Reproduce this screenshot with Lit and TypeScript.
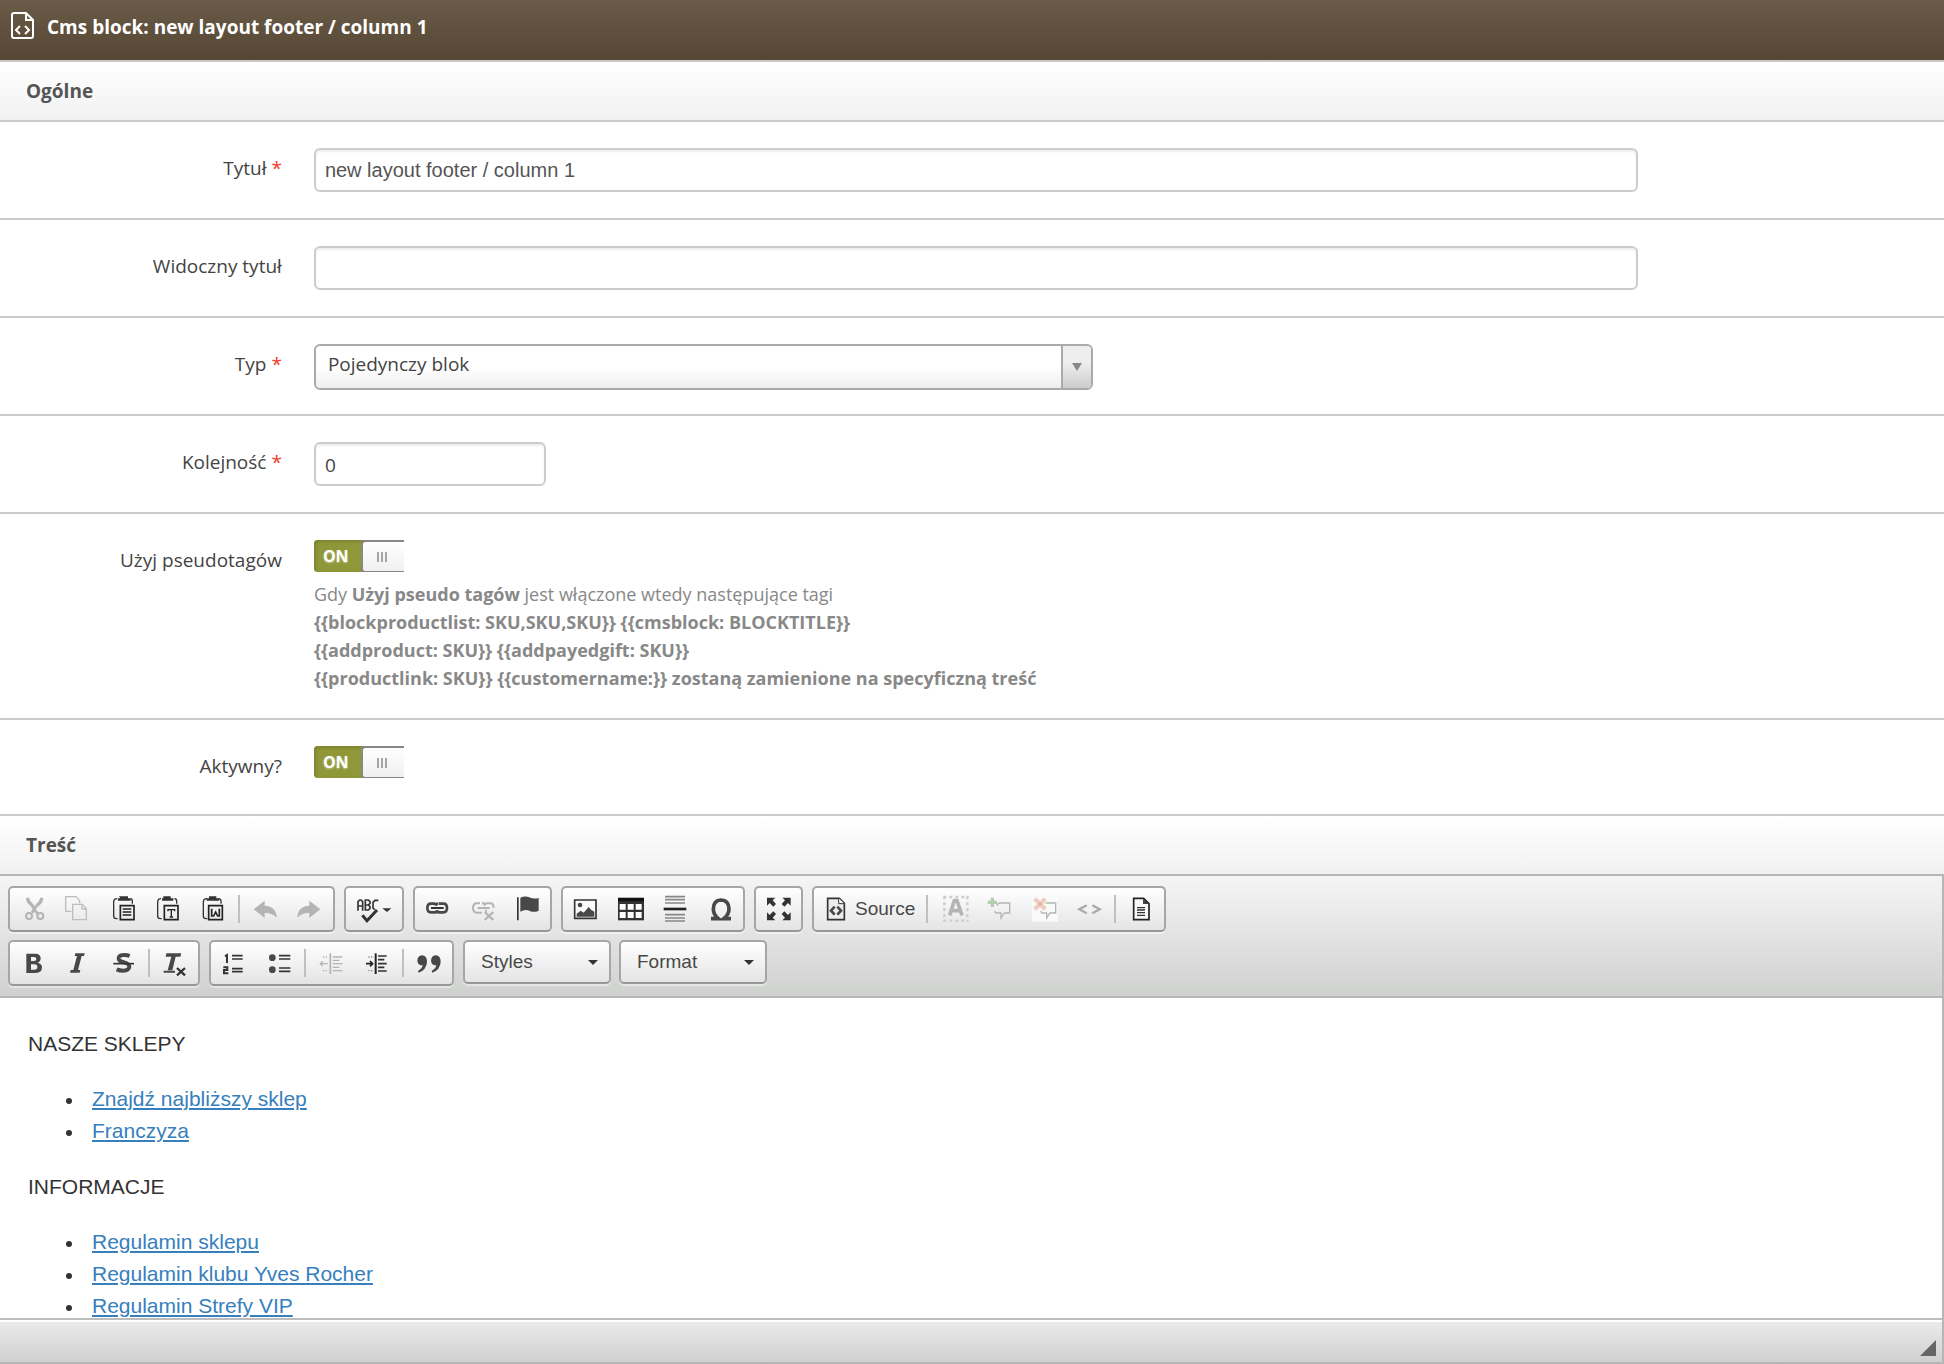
import { LitElement, html, css, svg, nothing, TemplateResult, SVGTemplateResult } from "lit";
import { customElement, property } from "lit/decorators.js";

const DARK = "#333";
const MID = "#484848";
const OFF = "#b4b4b4";

interface Glyph {
  box: string;
  art: SVGTemplateResult;
}

/* Toolbar glyphs, drawn on a grid of three units to the pixel. */
const GLYPHS: Record<string, Glyph> = {
  cut: {
    box: "30 39 135 126",
    art: svg`<g fill=${OFF}><path d="M78 68h9q2 9 10 17l9 11-6 9-10-14Q78 84 78 68Z"/><path d="M130 68h-9q-2 9-10 17l-9 10-9 15 6 6 14-21q17-11 17-27Z"/><path d="m103 98 14 17-5 5-13-15Z"/></g>
      <g fill="none" stroke=${OFF} stroke-width="6"><circle cx="87" cy="123" r="9"/><circle cx="121" cy="123" r="9"/></g>`,
  },
  copy: {
    box: "165 39 135 126",
    art: svg`<g fill="none" stroke="#bdbdbd" stroke-width="4"><path d="M214 109h-17V65h31l11 12v8"/><path d="M218 88h29l12 13v33h-41Z"/><path d="M246 88v14h13"/></g>`,
  },
  paste: {
    box: "300 39 135 126",
    art: svg`<path d="M357 64h27v6h8v7h-38v-7h7Z" fill=${DARK}/><path d="M352 71q-11 0-11 10v42q0 8 8 8h4M391 71q6 0 6 8v7" fill="none" stroke=${DARK} stroke-width="4"/>
      <path d="M361 92h41v42h-41Z" fill="none" stroke="#222" stroke-width="5"/><path d="M368 102h26M368 111h26M368 120h26" stroke="#222" stroke-width="5"/>`,
  },
  pasteText: {
    box: "435 39 135 126",
    art: svg`<path d="M490 64h22v6h8v7h-34v-7h4Z" fill=${DARK}/><path d="M483 71q-10 0-10 10v42q0 8 8 8h4M523 71q7 0 7 8v7" fill="none" stroke=${DARK} stroke-width="4"/>
      <path d="M493 92h41v42h-41Z" fill="none" stroke="#222" stroke-width="5"/><path d="M502 104h24M514 104v22M504 104v5M524 104v5M509 126h10" fill="none" stroke="#222" stroke-width="4"/>`,
  },
  pasteWord: {
    box: "570 39 135 126",
    art: svg`<path d="M627 64h22v6h8v7h-37v-7h7Z" fill=${DARK}/><path d="M621 71q-11 0-11 10v42q0 8 8 8h4M655 71q8 0 8 8v7" fill="none" stroke=${DARK} stroke-width="4"/>
      <path d="M626 92h41v42h-41Z" fill="none" stroke="#222" stroke-width="5"/><path d="M635 101v22h6l6-12 6 12h5v-22" fill="none" stroke="#222" stroke-width="5"/>`,
  },
  undo: {
    box: "729 39 135 126",
    art: svg`<path d="m761 103 33-26v15q35 2 36 36-13-15-36-14v15Z" fill=${OFF}/>`,
  },
  redo: {
    box: "864 39 135 126",
    art: svg`<path d="m961 103-33-26v15q-35 2-36 36 13-15 36-14v15Z" fill=${OFF}/>`,
  },
  spell: {
    box: "1038 39 168 126",
    art: svg`<g fill="none" stroke=${DARK} stroke-width="5"><path d="M1074 107V80l5-5h4l5 5v27M1074 93h14M1096 75v30h9l5-5v-5l-5-5h-9h9l5-5v-5l-5-5ZM1135 76h-10l-6 6v17l5 5"/></g>
      <path d="m1087 121 14 16 30-32" fill="none" stroke=${DARK} stroke-width="9"/><path d="M1147 100h27l-13 11Z" fill=${DARK}/>`,
  },
  link: {
    box: "45 39 135 126",
    art: svg`<g fill="none" stroke=${MID} stroke-width="8"><path d="M106 86H93q-11 0-11 13t11 13h12q8 0 10-6M117 86h13q11 0 11 13t-11 13h-12q-8 0-10-6M106 92q2-6 9-6"/></g><path d="M93 99h38" stroke=${DARK} stroke-width="6"/>`,
  },
  unlink: {
    box: "180 39 135 126",
    art: svg`<g fill="none" stroke=${OFF} stroke-width="6"><path d="M240 85h-9q-12 0-12 14t12 14h15M252 92q3-7 10-7h8q11 0 11 13M233 99h36M246 85h8M258 104v6"/><path d="m254 111 26 24m0-24-26 24" stroke-width="7"/></g>`,
  },
  anchor: {
    box: "315 39 135 126",
    art: svg`<path d="M351 67h5v69h-5Z" fill=${DARK}/><path d="M361 68q14-7 27-1 13 6 28 2v38q-15 7-28 0-13-5-27 3Z" fill=${MID}/>`,
  },
  image: {
    box: "489 39 135 126",
    art: svg`<path d="M524 75h64v55h-64Z" fill="#fafafa" stroke=${DARK} stroke-width="5"/><circle cx="540" cy="90" r="7" fill=${MID}/><path d="M530 125v-9l12-9 9 6 15-17 8 9 9 5v15Z" fill=${MID}/>`,
  },
  table: {
    box: "624 39 135 126",
    art: svg`<path d="M654 68h78v68h-78Z" fill=${DARK}/><path d="M654 74h78" stroke="#111" stroke-width="10"/><g fill="#fff"><path d="M659 87h18v17h-18ZM683 87h18v17h-18ZM707 87h18v17h-18ZM659 111h18v18h-18ZM683 111h18v18h-18ZM707 111h18v18h-18Z"/></g>`,
  },
  rule: {
    box: "759 39 135 126",
    art: svg`<path d="M791 102h68" stroke="#222" stroke-width="8"/><path d="M795 65h60M795 74h60M795 84h60M795 119h60M795 129h60M795 138h60" stroke="#888" stroke-width="5"/>`,
  },
  omega: {
    box: "894 39 135 126",
    art: svg`<path d="M933 131h22q-15-12-15-29 0-26 23-27 24 1 24 27 0 17-16 29h22" fill="none" stroke=${MID} stroke-width="11"/>`,
  },
  maximize: {
    box: "1068 39 135 126",
    art: svg`<g fill=${DARK}><path d="M1101 68h25l-8 8 10 11-8 8-11-11-8 8ZM1172 68h-25l8 8-10 11 8 8 11-11 8 8ZM1101 136h25l-8-8 10-11-8-8-11 11-8-8ZM1172 136h-25l8-8-10-11 8-8 11 11 8-8Z"/></g>`,
  },
  source: {
    box: "129 39 84 126",
    art: svg`<path d="M143 70h35l15 15v49h-50Z" fill="#ececec" stroke=${DARK} stroke-width="5"/><path d="M176 70v16h17" fill="#fff" stroke=${DARK} stroke-width="3"/><path d="m164 95-11 12 11 12M172 95l11 12-11 12" fill="none" stroke=${MID} stroke-width="8"/>`,
  },
  selectAll: {
    box: "453 39 135 126",
    art: svg`<path d="M490 66h76M490 137h76M493 64v76M562 64v76" stroke="#cdcdcd" stroke-width="7" stroke-dasharray="9 9" fill="none"/><path d="m509 121 14-44h8l15 44M514 107h28" fill="none" stroke=${OFF} stroke-width="11"/>`,
  },
  commentAdd: {
    box: "588 39 135 126",
    art: svg`<path d="M651 92q2-8 10-8h28v30h-16l-10 15v-15h-13q-5 0-5-6" fill="none" stroke=${OFF} stroke-width="4"/><path d="M637 68v28M623 82h28" stroke="#b3cfae" stroke-width="10"/>`,
  },
  commentRemove: {
    box: "723 39 135 126",
    art: svg`<path d="M756 64h78v76h-78Z" fill="#fafafa"/><path d="M797 84h30v30h-17l-10 15v-15h-12q-5 0-5-6" fill="none" stroke=${OFF} stroke-width="4"/><path d="m764 71 32 32m0-32-32 32" stroke="#efccc2" stroke-width="13"/><path d="M776 83h8v8h-8Z" fill="#dfa99d"/>`,
  },
  code: {
    box: "858 39 135 126",
    art: svg`<path d="m920 91-22 12 22 12M937 91l22 12-22 12" fill="none" stroke="#aaa" stroke-width="7"/>`,
  },
  template: {
    box: "1017 39 135 126",
    art: svg`<path d="M1061 70h30l16 16v48h-46Z" fill="#fafafa" stroke="#222" stroke-width="5"/><path d="M1089 70v17h18" fill="#444"/><path d="M1071 98h24M1071 105h24M1071 113h24M1071 121h24" stroke="#333" stroke-width="4"/>`,
  },
  bold: {
    box: "30 201 135 126",
    art: svg`<path d="M79 236h27q16 0 16 14 0 10-9 13 13 3 13 14 0 17-19 17H79Zm14 10v12h9q7 0 7-6t-7-6Zm0 22v16h10q9 0 9-8t-9-8Z" fill=${MID} fill-rule="evenodd"/>`,
  },
  italic: {
    box: "165 201 135 126",
    art: svg`<path d="M226 235h28l-2 8h-7l-11 42h7l-2 8h-29l2-8h8l11-42h-7Z" fill=${MID}/>`,
  },
  strike: {
    box: "300 201 135 126",
    art: svg`<path d="M389 243q-10-4-19-3-15 1-14 11 1 8 16 11 16 4 16 13-1 12-18 12-11 0-20-4" fill="none" stroke=${MID} stroke-width="12"/><path d="M340 266h62" stroke=${DARK} stroke-width="5"/>`,
  },
  clear: {
    box: "459 201 135 126",
    art: svg`<path d="M499 235h45l-3 10h-14l-10 41h-14l11-41h-17ZM491 287h34v6h-34Z" fill=${MID}/><path d="m531 279 24 22m0-22-24 22" stroke=${DARK} stroke-width="7"/>`,
  },
  numbered: {
    box: "633 201 135 126",
    art: svg`<path d="M675 244l6-4v24M670 277h12v8h-10v10h13" fill="none" stroke=${DARK} stroke-width="6"/><path d="M696 242h32M696 252h32M696 281h32M696 290h32" stroke=${DARK} stroke-width="5"/>`,
  },
  bulleted: {
    box: "768 201 135 126",
    art: svg`<g fill=${MID}><circle cx="817" cy="248" r="10"/><circle cx="817" cy="284" r="10"/></g><path d="M837 242h34M837 252h34M837 279h34M837 289h34" stroke=${DARK} stroke-width="5"/>`,
  },
  outdent: {
    box: "927 201 135 126",
    art: svg`<path d="M991 235v62" stroke=${OFF} stroke-width="5"/><path d="M998 246h29M998 256h20M998 266h29M998 277h20M998 287h29" stroke=${OFF} stroke-width="4"/><path d="M969 246h16M969 287h16" stroke=${OFF} stroke-width="4" stroke-dasharray="4 4"/><path d="M962 266h21m-15-7-7 7 7 7" fill="none" stroke=${OFF} stroke-width="4"/>`,
  },
  indent: {
    box: "1062 201 135 126",
    art: svg`<path d="M1127 235v62" stroke="#222" stroke-width="6"/><path d="M1134 243h26M1134 254h19M1134 266h26M1134 277h19M1134 288h26" stroke="#333" stroke-width="5"/><path d="M1105 246h16M1105 287h16" stroke="#888" stroke-width="4" stroke-dasharray="4 4"/><path d="M1098 266h20m-8-8 8 8-8 8" fill="none" stroke="#222" stroke-width="5"/>`,
  },
  quote: {
    box: "21 201 135 126",
    art: svg`<g fill=${MID}><path d="M66 241q15 1 15 19-1 24-25 33l-2-5q13-8 14-17-15 0-16-14 1-15 14-16Z"/><path d="M107 241q15 1 15 19-1 24-25 33l-2-5q13-8 14-17-15 0-16-14 1-15 14-16Z"/></g>`,
  },
};

type Tool = { glyph: string; label: string; off?: boolean; text?: string } | "|";

const t = (glyph: string, label: string, off = false, text = ""): Tool => ({ glyph, label, off, text });

const ROW_ONE: Tool[][] = [
  [
    t("cut", "Cut", true),
    t("copy", "Copy", true),
    t("paste", "Paste"),
    t("pasteText", "Paste as plain text"),
    t("pasteWord", "Paste from Word"),
    "|",
    t("undo", "Undo", true),
    t("redo", "Redo", true),
  ],
  [t("spell", "Spell Check As You Type")],
  [t("link", "Link"), t("unlink", "Unlink", true), t("anchor", "Anchor")],
  [t("image", "Image"), t("table", "Table"), t("rule", "Insert Horizontal Line"), t("omega", "Insert Special Character")],
  [t("maximize", "Maximize")],
  [
    t("source", "Source", false, "Source"),
    "|",
    t("selectAll", "Auto format", true),
    t("commentAdd", "Comment selection", true),
    t("commentRemove", "Uncomment selection", true),
    t("code", "Tag completion", true),
    "|",
    t("template", "Templates"),
  ],
];

const ROW_TWO: Tool[][] = [
  [t("bold", "Bold"), t("italic", "Italic"), t("strike", "Strikethrough"), "|", t("clear", "Remove Format")],
  [
    t("numbered", "Numbered list"),
    t("bulleted", "Bulleted list"),
    "|",
    t("outdent", "Decrease Indent", true),
    t("indent", "Increase Indent"),
    "|",
    t("quote", "Block Quote"),
  ],
];

@customElement("rich-editor")
export class RichEditor extends LitElement {
  static styles = css`
    :host {
      display: block;
      border: 2px solid #b6b6b6;
      border-left: 0;
      font-family: "Liberation Sans", Arial, sans-serif;
    }
    .toolbar {
      display: flex;
      flex-direction: column;
      gap: 8px;
      padding: 10px 8px;
      border-bottom: 2px solid #b6b6b6;
      background: linear-gradient(#f5f5f5, #cfd1cf);
    }
    .line {
      display: flex;
      flex-wrap: wrap;
      align-items: flex-start;
      gap: 9px;
    }
    .group,
    .combo {
      display: flex;
      align-items: center;
      box-sizing: border-box;
      border: 2px solid #a6a6a6;
      border-bottom-color: #979797;
      border-radius: 5px;
      background: linear-gradient(#fff, #e4e4e4);
      box-shadow: 0 2px 0 rgba(255, 255, 255, 0.4);
    }
    .tool {
      display: flex;
      align-items: center;
      height: 42px;
      padding: 0;
      border: 0;
      background: none;
      color: #484848;
      font: 19px "Liberation Sans", Arial, sans-serif;
    }
    .glyph {
      display: block;
      height: 42px;
    }
    .with-text {
      padding: 0 8px 0 9px;
      gap: 4px;
    }
    .rule {
      width: 2px;
      height: 28px;
      margin: 0 3px;
      background: #c0c0c0;
    }
    .combos {
      display: flex;
      gap: 8px;
    }
    .combo {
      height: 44px;
      display: grid;
      grid-template-columns: 144px;
      align-items: center;
    }
    .combo select {
      grid-area: 1 / 1;
      appearance: none;
      height: 40px;
      padding: 0 32px 2px 16px;
      border: 0;
      background: none;
      color: #484848;
      font: 19px "Liberation Sans", Arial, sans-serif;
    }
    .caret {
      grid-area: 1 / 1;
      justify-self: end;
      margin-right: 11px;
      pointer-events: none;
      border: 5px solid transparent;
      border-top-color: #333;
      border-bottom: 0;
    }
    .page {
      box-sizing: border-box;
      height: 320px;
      padding: 30px 28px 0;
      overflow: hidden;
      outline: 0;
      background: #fff;
      color: #333;
      font-size: 21px;
      line-height: 32px;
    }
    .page p {
      margin: 0 0 23px;
    }
    .page ul {
      margin: 0 0 24px;
      padding-left: 64px;
      list-style: none;
    }
    .page li::before {
      content: "";
      display: inline-block;
      width: 6px;
      height: 6px;
      margin: 0 20px 0 -26px;
      border-radius: 50%;
      background: #333;
      vertical-align: 2px;
    }
    .page a {
      color: #3680bd;
      text-decoration-thickness: 2px;
      text-underline-offset: 2px;
    }
    .status {
      display: flex;
      justify-content: flex-end;
      align-items: flex-end;
      box-sizing: border-box;
      height: 44px;
      padding: 0 6px 6px 0;
      border-top: 2px solid #bdbdbd;
      box-shadow: inset 0 2px 0 #fff;
      background: linear-gradient(#ebebeb, #cfd1cf);
    }
    .grip {
      width: 16px;
      height: 16px;
      background: #666;
      clip-path: polygon(100% 0, 100% 100%, 0 100%);
    }
  `;

  private tool(item: Tool): TemplateResult {
    if (item === "|") return html`<span class="rule"></span>`;
    const g = GLYPHS[item.glyph];
    return html`<button
      class="tool ${item.text ? "with-text" : ""}"
      type="button"
      title=${item.label}
      aria-label=${item.label}
      ?disabled=${item.off}
    >
      <svg class="glyph" viewBox=${g.box} width=${Number(g.box.split(" ")[2]) / 3} height="42" aria-hidden="true">${g.art}</svg>
      ${item.text ? html`<span>${item.text}</span>` : nothing}
    </button>`;
  }

  private combo(name: string): TemplateResult {
    return html`<span class="combo"
      ><select aria-label=${name}>
        <option>${name}</option></select
      ><span class="caret"></span
    ></span>`;
  }

  private groups(list: Tool[][]): TemplateResult[] {
    return list.map((g) => html`<div class="group">${g.map((i) => this.tool(i))}</div>`);
  }

  private links(items: string[]): TemplateResult {
    return html`<ul>
      ${items.map((i) => html`<li><a href="#">${i}</a></li>`)}
    </ul>`;
  }

  render() {
    return html`
      <div class="toolbar">
        <div class="line">${this.groups(ROW_ONE)}</div>
        <div class="line">
          ${this.groups(ROW_TWO)}
          <div class="combos">${this.combo("Styles")}${this.combo("Format")}</div>
        </div>
      </div>
      <div class="page" contenteditable="true" spellcheck="false" role="textbox" aria-label="Treść">
        <p>NASZE SKLEPY</p>
        ${this.links(["Znajdź najbliższy sklep", "Franczyza"])}
        <p>INFORMACJE</p>
        ${this.links(["Regulamin sklepu", "Regulamin klubu Yves Rocher", "Regulamin Strefy VIP"])}
      </div>
      <div class="status"><span class="grip"></span></div>
    `;
  }
}

@customElement("app-root")
export class AppRoot extends LitElement {
  @property({ type: String }) heading = "new layout footer / column 1";

  static styles = css`
    :host {
      display: block;
      background: #fff;
      color: #444;
      font-family: "Open Sans", sans-serif;
      font-size: 19px;
    }
    .bar {
      display: flex;
      align-items: center;
      gap: 12px;
      box-sizing: border-box;
      height: 62px;
      padding: 0 11px 6px;
      border-bottom: 2px solid #c9c9c9;
      background: linear-gradient(#695b48, #554733);
      color: #fff;
    }
    .bar h1,
    .section {
      margin: 0;
      font-size: 19px;
      font-weight: 700;
    }
    .bar svg {
      display: block;
      margin-bottom: 4px;
    }
    .section {
      padding: 0 26px;
      line-height: 58px;
      color: #555;
      background: linear-gradient(#fff, #f1f1f1);
    }
    .general {
      border-bottom: 2px solid #c9c9c9;
    }
    .row {
      display: grid;
      grid-template-columns: 14.5% minmax(0, 1fr);
      column-gap: 32px;
      align-items: start;
      padding: 26px 0;
      border-bottom: 2px solid #c9c9c9;
    }
    .label {
      padding-bottom: 2px;
      text-align: right;
      line-height: 40px;
    }
    .req {
      color: #f0392b;
    }
    .text {
      display: block;
      box-sizing: border-box;
      height: 44px;
      padding: 0 9px;
      border: 2px solid #ccc;
      border-radius: 6px;
      background: #fff;
      box-shadow: inset 0 2px 2px rgba(0, 0, 0, 0.07);
      color: #555;
      font: 20px "Liberation Sans", Arial, sans-serif;
    }
    .wide {
      width: 81.2%;
    }
    .small {
      width: 232px;
      padding-top: 2px;
      font: 19px "Open Sans", sans-serif;
      color: #444;
    }
    .picker {
      display: grid;
      grid-template-columns: minmax(0, 1fr) 30px;
      box-sizing: border-box;
      width: 47.8%;
      height: 46px;
      margin-bottom: -2px;
      border: 2px solid #aaa;
      border-radius: 6px;
      overflow: hidden;
      background: linear-gradient(#fff 50%, #eee);
    }
    .picker select {
      grid-area: 1 / 1 / 2 / 3;
      appearance: none;
      padding: 0 40px 6px 12px;
      border: 0;
      background: none;
      color: #444;
      font: 19px "Open Sans", sans-serif;
    }
    .arrow {
      grid-area: 1 / 2;
      display: grid;
      place-items: center;
      pointer-events: none;
      border-left: 2px solid #aaa;
      background: linear-gradient(#eee 40%, #ccc);
    }
    .arrow::after {
      content: "";
      border: 5px solid transparent;
      border-top: 8px solid #888;
      border-bottom: 0;
    }
    .switch {
      display: grid;
      grid-template-columns: 47px 43px;
      width: 90px;
      height: 32px;
      border-radius: 4px 0 0 4px;
      overflow: hidden;
      background: #8f9738;
      box-shadow: inset 2px 2px 3px #7d8530;
    }
    .switch input {
      grid-area: 1 / 1 / 2 / 3;
      width: 100%;
      height: 100%;
      margin: 0;
      opacity: 0;
    }
    .on {
      grid-area: 1 / 1;
      padding-left: 9px;
      color: #fff;
      font-size: 16px;
      font-weight: 700;
      line-height: 33px;
      text-shadow: 0 1px 2px rgba(255, 255, 255, 0.5);
      pointer-events: none;
    }
    .thumb {
      grid-area: 1 / 2;
      display: flex;
      justify-content: center;
      align-items: center;
      gap: 2px;
      padding-right: 2px;
      border: 2px solid #888;
      border-right: 0;
      border-radius: 4px 0 0 4px;
      background: linear-gradient(#fff, #f0f0f0);
      pointer-events: none;
    }
    .thumb i {
      width: 2px;
      height: 10px;
      background: #a5a5a5;
    }
    .help {
      margin: 8px 0 0;
      color: #888;
      font-size: 18px;
      line-height: 28px;
    }
  `;

  private row(id: string, label: string, required: boolean, control: TemplateResult): TemplateResult {
    return html`<div class="row">
      <label class="label" for=${id}>${label}${required ? html` <span class="req">*</span>` : nothing}</label>
      <div>${control}</div>
    </div>`;
  }

  private toggle(id: string): TemplateResult {
    return html`<div class="switch">
      <input id=${id} type="checkbox" checked />
      <span class="on">ON</span>
      <span class="thumb"><i></i><i></i><i></i></span>
    </div>`;
  }

  render() {
    return html`
      <header class="bar">
        <svg width="24" height="28" viewBox="0 0 24 28" fill="none" stroke="#fff" stroke-width="2" aria-hidden="true">
          <path d="M3 2h12l7 7v16q0 2-2 2H3q-2 0-2-2V4q0-2 2-2Z" />
          <path d="M15 2v7h7" />
          <path d="m9 15-4 4 4 4M14 15l4 4-4 4" />
        </svg>
        <h1>Cms block: ${this.heading}</h1>
      </header>
      <h2 class="section general">Ogólne</h2>
      <form>
        ${this.row("title", "Tytuł", true, html`<input id="title" class="text wide" type="text" .value=${this.heading} />`)}
        ${this.row("visible", "Widoczny tytuł", false, html`<input id="visible" class="text wide" type="text" />`)}
        ${this.row(
          "type",
          "Typ",
          true,
          html`<div class="picker">
            <select id="type">
              <option>Pojedynczy blok</option>
            </select>
            <span class="arrow"></span>
          </div>`,
        )}
        ${this.row("order", "Kolejność", true, html`<input id="order" class="text small" type="text" value="0" />`)}
        ${this.row(
          "tags",
          "Użyj pseudotagów",
          false,
          html`${this.toggle("tags")}
            <p class="help">
              Gdy <b>Użyj pseudo tagów</b> jest włączone wtedy następujące tagi<br />
              <b>{{blockproductlist: SKU,SKU,SKU}} {{cmsblock: BLOCKTITLE}}</b><br />
              <b>{{addproduct: SKU}} {{addpayedgift: SKU}}</b><br />
              <b>{{productlink: SKU}} {{customername:}} zostaną zamienione na specyficzną treść</b>
            </p>`,
        )}
        ${this.row("active", "Aktywny?", false, this.toggle("active"))}
        <h2 class="section">Treść</h2>
        <rich-editor></rich-editor>
      </form>
    `;
  }
}
